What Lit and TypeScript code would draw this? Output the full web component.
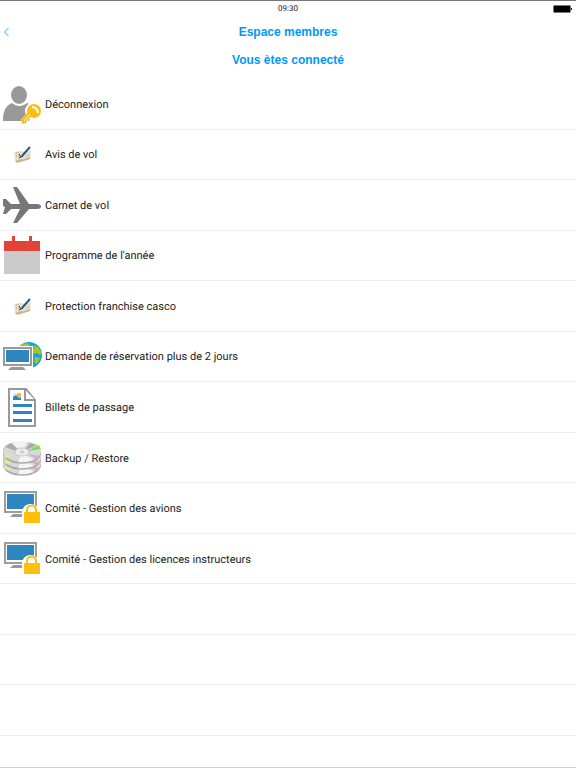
import { LitElement, html, css, svg, TemplateResult } from "lit";
import { customElement, property } from "lit/decorators.js";

const lockedMonitor = svg`
  <path fill="#9d9d9d" d="M2 2h33v22H2z"/><path fill="#fff" d="M4 4h29v18H4z"/>
  <path fill="#2e86c1" d="M5 5h27v15H5z"/><path fill="#999" d="M11 25h12v3H8z"/>
  <path fill="#fff" d="M20 24c0-12 17-12 17 0v5H20z"/>
  <path fill="none" stroke="#fdbf0a" stroke-width="2" d="M25 24v-3a4.500 4.500 0 0 1 9 0v3"/>
  <rect x="22" y="23" width="16" height="11" rx="1" fill="#fdbf0a"/>`;

const notepad = svg`
  <path fill="#e9dfcb" d="M12 17l7-1 4 1 6-2-1 9-7 2-6 2-2-1z"/>
  <path fill="#c9b695" d="M14 25l8-1 6-2v2l-6 2-7 2z"/>
  <path stroke="#a79a86" stroke-dasharray="1 1" d="M14 18l4-1M14 21h4M25 21l3-1"/>
  <path stroke="#1d5b91" stroke-width="2" d="M20 21l8-9"/>
  <path stroke="#333" d="M17 23l4-2M17 19l2 3"/>`;

const disc = (y: number) => svg`
  <g transform="translate(0 ${y})">
    <path fill="#aaa" d="M1 9c0-11 38-11 38 0v4c-2 13-36 13-38 0z"/>
    <path fill="#d8d8d8" d="M1 9c0-11 38-11 38 0v2c-2 13-36 13-38 0z"/>
    <path fill="#f4f4f4" d="M20 12L10 2q8-3 15-1zM20 12l12 7q-8 3-16 2z"/>
    <path fill="#aaa" d="M20 12L3 6l6-4zM20 12l8-10 6 2z"/>
    <path fill="#efe985" d="M11 14l-9 0q0 3 4 3z"/>
    <path fill="#d2aed0" d="M26 13l12 2q-1 2-4 3z"/>
  </g>`;

const icons: Record<string, TemplateResult> = {
  user: svg`
    <ellipse cx="17" cy="10" rx="8" ry="9" fill="#999"/>
    <path fill="#999" d="M1 36c0-9 2-15 9-18 5 4 10 4 15 0 5 2 7 5 8 9l-6 9z"/>
    <path stroke="#fff" stroke-width="6" d="M29 28l-8 9"/><circle cx="32" cy="26" r="9" fill="#fff"/>
    <path fill="#fdbd10" d="M26 27l-7 8 1 4 4-1 1-3 2-1 1-3 4-1z"/>
    <ellipse cx="32" cy="26" rx="7" ry="7" fill="#fdbd10"/>
    <path stroke="#fff" stroke-width="2" d="M30 22q5 0 6 6"/>
    <path stroke="#fff" d="M28 29l-6 7"/>`,
  note: notepad,
  plane: svg`<path fill="#777" d="M1 13h3l5 5h9L11 1h4l12 17h8q4 0 4 2.500t-4 2.500h-8L15 37h-4l7-14H9l-5 5H1l2-7-2-1z"/>`,
  calendar: svg`
    <path fill="#cbcbcb" d="M2 15h36v23H2z"/>
    <path fill="#e24237" d="M2 5h8V0h3v5h14V0h3v5h8v10H2z"/>`,
  globe: svg`
    <circle cx="27" cy="18" r="13" fill="#12a5e6"/>
    <path fill="#a7c520" d="M19 8l6-2 3 2-3 3h-4l-1 3-4-1zM31 8l5 2 4 6-2 2-3-2-4 1-2-4 3-2zM33 20l5 1-3 6-3-2z"/>
    <path fill="#fff" d="M0 9h31v22H0z"/>
    <path fill="#999" d="M1 10h29v19H1z"/><path fill="#fff" d="M3 12h25v15H3z"/>
    <path fill="#2e86c1" d="M4 13h23v12H4z"/><path fill="#999" d="M9 30h12l3 3H6z"/>`,
  ticket: svg`
    <path fill="#fff" stroke="#999" stroke-width="2" d="M7 1h17l9 11v26H7z"/>
    <path fill="#fff" stroke="#999" stroke-width="2" d="M23 2v10h10"/>
    <path fill="#dceaf2" d="M11 5h8v7h-8z"/><circle cx="17" cy="7" r="2" fill="#ffae23"/>
    <path fill="#2e86c1" d="M11 9l3-2 3 3 2-1v3h-8zM11 16h19v3H11zM11 23h19v3H11zM11 31h19v3H11z"/>`,
  discs: svg`${disc(14)}${disc(8)}${disc(2)}
    <path fill="#4fdc70" d="M25 12l12-5 1 3z"/><path fill="#86e52b" d="M30 9l7-3 1 4z"/>
    <ellipse cx="20" cy="13" rx="7" ry="4" fill="#eee" stroke="#c4c4c4"/><ellipse cx="20" cy="13" rx="2" ry="1" fill="#fff" stroke="#bbb"/>`,
  locked: lockedMonitor,
};

@customElement("menu-row")
export class MenuRow extends LitElement {
  @property() icon = "";
  @property() label = "";

  static styles = css`
    :host { display: flex; border-bottom: 1px solid #efefef; }
    a {
      flex: 1; display: flex; align-items: center; gap: 3px; padding: 2px 0 0 2px;
      color: #222; text-decoration: none; font-size: 11px; line-height: 16px;
      text-rendering: geometricPrecision;
    }
    svg { width: 40px; height: 40px; flex: none; }
  `;

  render() {
    return this.label
      ? html`<a href="#"><svg viewBox="0 0 40 40" fill="none" aria-hidden="true">${icons[this.icon]}</svg><span>${this.label}</span></a>`
      : null;
  }
}

@customElement("app-root")
export class AppRoot extends LitElement {
  private rows = [
    ["user", "Déconnexion"],
    ["note", "Avis de vol"],
    ["plane", "Carnet de vol"],
    ["calendar", "Programme de l'année"],
    ["note", "Protection franchise casco"],
    ["globe", "Demande de réservation plus de 2 jours"],
    ["ticket", "Billets de passage"],
    ["discs", "Backup / Restore"],
    ["locked", "Comité - Gestion des avions"],
    ["locked", "Comité - Gestion des licences instructeurs"],
    ["", ""], ["", ""], ["", ""],
  ];

  static styles = css`
    :host {
      display: flex; flex-direction: column; box-sizing: border-box; min-height: 100vh;
      padding-bottom: 31px; background: #fff; color: #222; font-family: Roboto, sans-serif;
      border-top: 1px solid #7d7478; border-bottom: 1px solid #b0d8f6;
    }
    .status, .nav { display: grid; grid-template-columns: 1fr auto 1fr; align-items: center; }
    .status { height: 15px; padding: 0 3px; font-size: 8px; line-height: 15px; text-rendering: geometricPrecision; }
    .battery { grid-column: 3; justify-self: end; width: 20px; height: 8px; }
    .time { grid-column: 2; }
    .nav { height: 31px; }
    button { justify-self: start; border: 0; background: none; padding: 0 3px; display: flex; }
    .chevron { width: 7px; height: 10px; }
    h1, h2 {
      margin: 0; color: #0099fa; font-family: "Liberation Sans", Arial, sans-serif;
      font-size: 12px; line-height: 16px; font-weight: 700; text-align: center;
    }
    h2 { padding: 5px 0 11px; }
    .list { flex: 1; display: grid; grid-auto-rows: minmax(50px, 1fr); }
  `;

  render() {
    return html`
      <div class="status">
        <span class="time">09:30</span>
        <svg class="battery" viewBox="0 0 20 8" role="img" aria-label="Batterie">
          <rect x="0.500" y="0.500" width="17" height="7" rx="1" fill="#000" stroke="#777"/><path fill="#222" d="M18 3h1v2h-1z"/>
        </svg>
      </div>
      <header class="nav">
        <button aria-label="Retour"><svg class="chevron" viewBox="0 0 7 10"><path d="M5.500 1L1.500 5l4 4" fill="none" stroke="#27a9f5"/></svg></button>
        <h1>Espace membres</h1>
      </header>
      <h2>Vous ètes connecté</h2>
      <nav class="list">
        ${this.rows.map(([icon, label]) => html`<menu-row .icon=${icon} .label=${label}></menu-row>`)}
      </nav>
    `;
  }
}
